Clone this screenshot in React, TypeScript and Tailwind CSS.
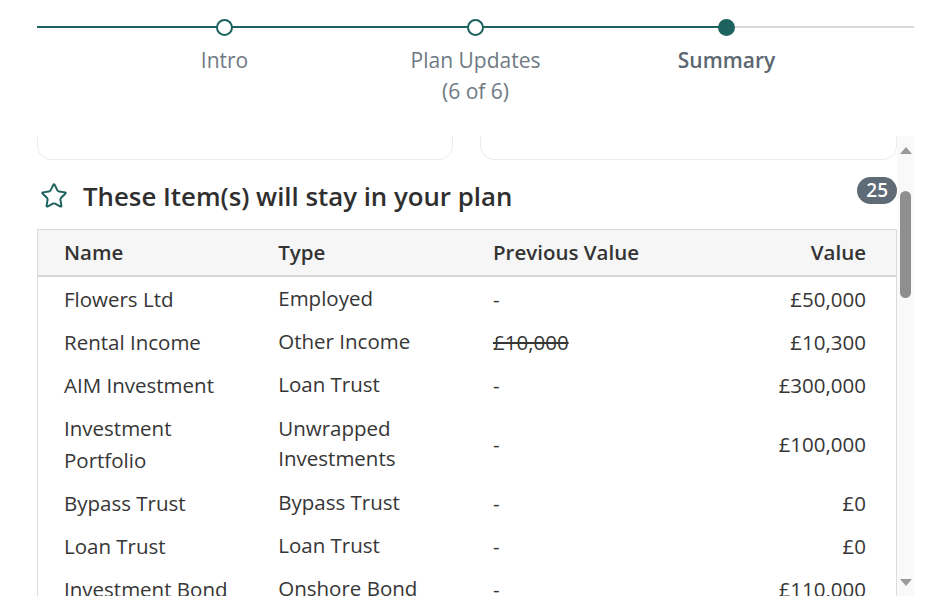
import { Star } from 'lucide-react'

const steps = [
  { label: 'Intro', done: true },
  { label: 'Plan Updates', sub: '(6 of 6)', done: true },
  { label: 'Summary', current: true },
]

const rows = [
  { name: 'Flowers Ltd', type: 'Employed', prev: '-', value: '£50,000' },
  { name: 'Rental Income', type: 'Other Income', prev: '£10,000', struck: true, value: '£10,300' },
  { name: 'AIM Investment', type: 'Loan Trust', prev: '-', value: '£300,000' },
  { name: 'Investment Portfolio', type: 'Unwrapped Investments', prev: '-', value: '£100,000' },
  { name: 'Bypass Trust', type: 'Bypass Trust', prev: '-', value: '£0' },
  { name: 'Loan Trust', type: 'Loan Trust', prev: '-', value: '£0' },
  { name: 'Investment Bond', type: 'Onshore Bond', prev: '-', value: '£110,000' },
  { name: 'Cash Savings', type: 'Cash', prev: '-', value: '£25,000' },
]

function Stepper() {
  return (
    <div className="relative ml-[37px] mr-[26px] pt-[19px]">
      <div className="absolute left-0 right-0 top-[26px] h-[2px] bg-[#d9d9d9]" />
      <div className="absolute left-0 top-[26px] h-[2px] w-[690px] bg-[#1e625f]" />
      <div className="relative flex justify-center">
        {steps.map((s) => (
          <div key={s.label} className="flex w-[251px] flex-col items-center">
            <div
              className={
                s.current
                  ? 'h-[17px] w-[17px] rounded-full bg-[#1e625f]'
                  : 'h-[17px] w-[17px] rounded-full border-2 border-[#1e625f] bg-white'
              }
            />
            <div
              className={
                'mt-[9px] text-center text-[21px] leading-[31px] ' +
                (s.current ? 'font-semibold text-[#5c6771]' : 'text-[#6f7a84]')
              }
            >
              <div>{s.label}</div>
              {s.sub && <div>{s.sub}</div>}
            </div>
          </div>
        ))}
      </div>
    </div>
  )
}

function Scrollbar() {
  return (
    <div className="flex w-[17px] flex-col items-center bg-[#f9f9f9]">
      <div className="mt-[11px] h-0 w-0 border-x-[6px] border-b-[7px] border-x-transparent border-b-[#9a9a9a]" />
      <div className="mt-[37px] h-[107px] w-[11px] rounded-full bg-[#8f8f8f]" />
      <div className="flex-1" />
      <div className="mb-[10px] h-0 w-0 border-x-[6px] border-t-[7px] border-x-transparent border-t-[#9a9a9a]" />
    </div>
  )
}

export default function App() {
  return (
    <div className="h-[608px] w-[940px] overflow-hidden bg-white font-['Open_Sans',sans-serif] text-[#333]">
      <Stepper />
      <div className="ml-[37px] mt-[29px] flex h-[460px]">
        <div className="w-[860px] overflow-hidden">
          <div className="-mt-[76px] flex gap-[27px]">
            <div className="h-[100px] w-[416px] rounded-b-[14px] border border-[#ececec]" />
            <div className="h-[100px] w-[417px] rounded-b-[14px] border border-[#ececec]" />
          </div>

          <div className="mt-[17px] flex items-start justify-between">
            <div className="flex items-center gap-[15px] pl-[3px]">
              <Star className="h-[28px] w-[28px] text-[#1e625f]" strokeWidth={1.7} />
              <h2 className="mt-[1px] text-[25.8px] font-semibold leading-[36px] text-[#2f2f2f]">
                These Item(s) will stay in your plan
              </h2>
            </div>
            <span className="rounded-full bg-[#5f6b76] px-[9px] text-[19px] font-semibold leading-[27px] text-white">
              25
            </span>
          </div>

          <table className="mt-[15px] w-full table-fixed border-collapse border-x border-t border-[#dcdcdc] text-[20.5px]">
            <thead>
              <tr className="border-b-2 border-[#d6d6d6] bg-[#f6f6f6]">
                <th className="h-[46px] pl-[26px] text-left font-semibold">Name</th>
                <th className="pl-[26px] text-left font-semibold">Type</th>
                <th className="pl-[26px] text-left font-semibold">Previous Value</th>
                <th className="pr-[30px] text-right font-semibold">Value</th>
              </tr>
            </thead>
            <tbody className="text-[#363636]">
              {rows.map((r) => (
                <tr key={r.name}>
                  <td className="pb-[5px] pl-[26px] pr-4 pt-[6px] leading-[32px]">{r.name}</td>
                  <td className="pb-[6px] pl-[26px] pr-4 pt-[5px] leading-[30px]">{r.type}</td>
                  <td className="pb-[5px] pl-[26px] pt-[6px] leading-[32px]">
                    {r.struck ? <span className="line-through">{r.prev}</span> : r.prev}
                  </td>
                  <td className="pb-[5px] pr-[30px] pt-[6px] text-right leading-[32px]">{r.value}</td>
                </tr>
              ))}
            </tbody>
          </table>
        </div>
        <Scrollbar />
      </div>
    </div>
  )
}
